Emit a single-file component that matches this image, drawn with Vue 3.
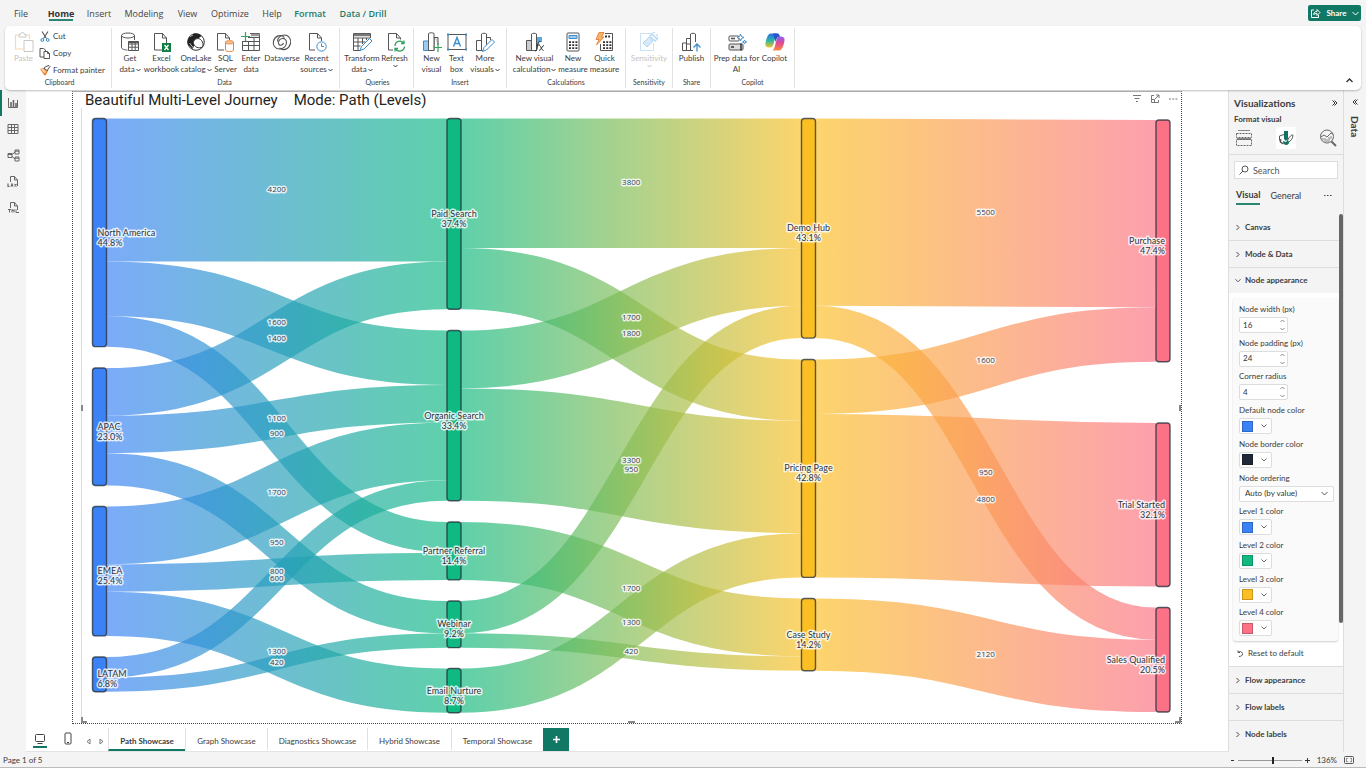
<script setup>
import { ref } from 'vue'

const menus = [
  { t: 'File', c: 'file' }, { t: 'Home', c: 'home' }, { t: 'Insert', c: 'insert' }, { t: 'Modeling', c: 'modeling' },
  { t: 'View', c: 'view' }, { t: 'Optimize', c: 'optimize' }, { t: 'Help', c: 'help' },
  { t: 'Format', c: 'format' }, { t: 'Data / Drill', c: 'drill' }
]

const groups = [
  { name: 'Data', cls: 'g-data', tools: [
    { icon: 'get', a: 'Get', b: 'data', caret: true },
    { icon: 'excel', a: 'Excel', b: 'workbook' },
    { icon: 'onelake', a: 'OneLake', b: 'catalog', caret: true },
    { icon: 'sql', a: 'SQL', b: 'Server' },
    { icon: 'enter', a: 'Enter', b: 'data' },
    { icon: 'dataverse', a: 'Dataverse', b: '' },
    { icon: 'recent', a: 'Recent', b: 'sources', caret: true }
  ] },
  { name: 'Queries', cls: 'g-queries', tools: [
    { icon: 'transform', a: 'Transform', b: 'data', caret: true },
    { icon: 'refresh', a: 'Refresh', b: '', caret: true }
  ] },
  { name: 'Insert', cls: 'g-insert', tools: [
    { icon: 'visual', a: 'New', b: 'visual' },
    { icon: 'textbox', a: 'Text', b: 'box' },
    { icon: 'more', a: 'More', b: 'visuals', caret: true }
  ] },
  { name: 'Calculations', cls: 'g-calc', tools: [
    { icon: 'calc', a: 'New visual', b: 'calculation', caret: true },
    { icon: 'measure', a: 'New', b: 'measure' },
    { icon: 'quick', a: 'Quick', b: 'measure' }
  ] },
  { name: 'Sensitivity', cls: 'g-sens', tools: [{ icon: 'sens', a: 'Sensitivity', b: '', caret: true, off: true }] },
  { name: 'Share', cls: 'g-share', tools: [{ icon: 'publish', a: 'Publish', b: '' }] },
  { name: 'Copilot', cls: 'g-copilot', tools: [
    { icon: 'prep', a: 'Prep data for', b: 'AI' },
    { icon: 'copilot', a: 'Copilot', b: '' }
  ] }
]

const palette = ['#3b82f6', '#10b981', '#fbbf24', '#fb7185']
const columns = [92.5, 447, 801.5, 1156]
const nodeWidth = 14
const unit = 0.03405

const nodes = [
  { id: 'North America', level: 0, y: 118.5, pct: '44.8%' },
  { id: 'APAC', level: 0, y: 368, pct: '23.0%' },
  { id: 'EMEA', level: 0, y: 506.5, pct: '25.4%' },
  { id: 'LATAM', level: 0, y: 657, pct: '6.8%' },
  { id: 'Paid Search', level: 1, y: 118.5, pct: '37.4%' },
  { id: 'Organic Search', level: 1, y: 330.5, pct: '33.4%' },
  { id: 'Partner Referral', level: 1, y: 522, pct: '11.4%' },
  { id: 'Webinar', level: 1, y: 601, pct: '9.2%' },
  { id: 'Email Nurture', level: 1, y: 668.5, pct: '8.7%' },
  { id: 'Demo Hub', level: 2, y: 118.5, pct: '43.1%' },
  { id: 'Pricing Page', level: 2, y: 359.5, pct: '42.8%' },
  { id: 'Case Study', level: 2, y: 598.5, pct: '14.2%' },
  { id: 'Purchase', level: 3, y: 120, pct: '47.4%' },
  { id: 'Trial Started', level: 3, y: 423, pct: '32.1%' },
  { id: 'Sales Qualified', level: 3, y: 607.5, pct: '20.5%' }
].map(n => ({ ...n, x: columns[n.level], outgoing: 0, incoming: 0 }))

const flows = [
  ['North America', 'Paid Search', 4200], ['North America', 'Organic Search', 1600], ['North America', 'Partner Referral', 900],
  ['APAC', 'Paid Search', 1400], ['APAC', 'Organic Search', 1100], ['APAC', 'Webinar', 950],
  ['EMEA', 'Organic Search', 1700], ['EMEA', 'Partner Referral', 800], ['EMEA', 'Email Nurture', 1300],
  ['LATAM', 'Organic Search', 600], ['LATAM', 'Webinar', 420],
  ['Paid Search', 'Demo Hub', 3800], ['Paid Search', 'Pricing Page', 1800],
  ['Organic Search', 'Demo Hub', 1700], ['Organic Search', 'Pricing Page', 3300],
  ['Partner Referral', 'Case Study', 1700],
  ['Webinar', 'Demo Hub', 950], ['Webinar', 'Case Study', 420],
  ['Email Nurture', 'Pricing Page', 1300],
  ['Demo Hub', 'Purchase', 5500], ['Demo Hub', 'Sales Qualified', 950],
  ['Pricing Page', 'Purchase', 1600], ['Pricing Page', 'Trial Started', 4800],
  ['Case Study', 'Sales Qualified', 2120]
]

const byId = Object.fromEntries(nodes.map(n => [n.id, n]))
const links = flows.map(([from, to, value]) => {
  const s = byId[from]
  const t = byId[to]
  const w = value * unit
  const y0 = s.y + s.outgoing + w / 2
  const y1 = t.y + t.incoming + w / 2
  s.outgoing += w
  t.incoming += w
  const x0 = s.x + nodeWidth
  const x1 = t.x
  const xm = (x0 + x1) / 2
  return { key: from + to, value, w, level: s.level, xm, ym: (y0 + y1) / 2, d: `M${x0},${y0}C${xm},${y0} ${xm},${y1} ${x1},${y1}` }
})
nodes.forEach(n => {
  n.h = Math.max(n.outgoing, n.incoming)
  n.tx = n.level === 0 ? n.x + 5 : n.level === 3 ? n.x + 9 : n.x + 7
  n.anchor = n.level === 0 ? 'start' : n.level === 3 ? 'end' : 'middle'
})
const gradients = [0, 1, 2].map(i => ({ id: 'flow' + i, x1: columns[i] + nodeWidth, x2: columns[i + 1], a: palette[i], b: palette[i + 1] }))

const fields = ref([
  { id: 'nw', label: 'Node width (px)', type: 'number', value: 16 },
  { id: 'np', label: 'Node padding (px)', type: 'number', value: 24 },
  { id: 'cr', label: 'Corner radius', type: 'number', value: 4 },
  { id: 'dc', label: 'Default node color', type: 'color', value: '#3b82f6' },
  { id: 'bc', label: 'Node border color', type: 'color', value: '#1f2937' },
  { id: 'no', label: 'Node ordering', type: 'select', value: 'Auto (by value)' },
  { id: 'l1', label: 'Level 1 color', type: 'color', value: palette[0] },
  { id: 'l2', label: 'Level 2 color', type: 'color', value: palette[1] },
  { id: 'l3', label: 'Level 3 color', type: 'color', value: palette[2] },
  { id: 'l4', label: 'Level 4 color', type: 'color', value: palette[3] }
])

const pages = [
  { t: 'Path Showcase', c: 'p-path' }, { t: 'Graph Showcase', c: 'p-graph' }, { t: 'Diagnostics Showcase', c: 'p-diag' },
  { t: 'Hybrid Showcase', c: 'p-hybrid' }, { t: 'Temporal Showcase', c: 'p-temporal' }
]
const page = ref('Path Showcase')
const query = ref('')
const zoom = ref(56)
</script>

<template>
  <div class="app">
    <header class="menubar">
      <nav class="menus" aria-label="Ribbon tabs">
        <button v-for="m in menus" :key="m.t" type="button" class="menu" :class="'m-' + m.c">{{ m.t }}</button>
      </nav>
      <button type="button" class="share">
        <svg width="11" height="11" viewBox="0 0 11 11" fill="none" stroke="#fff"><path d="M4 2H1.500v7.500h7V7M3.500 6.500c.4-2 1.600-3 3.500-3V1.500l3 3-3 3V5.500c-1.500 0-2.500.2-3.500 1z" /></svg>
        <span>Share</span>
        <svg width="7" height="5" viewBox="0 0 7 5" fill="none" stroke="#fff"><path d="M.5 1l3 3 3-3" /></svg>
      </button>
    </header>

    <section class="ribbon" aria-label="Home ribbon">
      <div class="group g-clip">
        <div class="clip">
          <button type="button" class="tool paste" disabled>
            <svg class="icon" viewBox="0 0 20 20" fill="none"><path d="M5 3H1.500v14H9M12 3h3.500v4" stroke="#f7d9b5" stroke-width="1.200" /><path d="M5 5V2.500h1.500a2 2 0 0 1 4 0H12V5z" stroke="#c8c8c8" /><path d="M10 8.500h9v11h-9z" stroke="#c8c8c8" fill="#fff" /></svg>
            <span>Paste</span>
          </button>
          <div class="clip-list">
            <button type="button"><svg width="12" height="11" viewBox="0 0 12 11" fill="none"><path d="M3 .5l4.500 7M9 .5l-4.500 7" stroke="#555" stroke-width="1.100" /><circle cx="3.300" cy="9" r="1.400" stroke="#2b88c8" /><circle cx="8.700" cy="9" r="1.400" stroke="#2b88c8" /></svg>Cut</button>
            <button type="button"><svg width="12" height="11" viewBox="0 0 12 11" fill="#fff" stroke="#555"><path d="M1 .5h3.500L6.500 2v7H1z" /><path d="M5 3.500h3.500l2 2v5H5z" /><path d="M8.500 3.500v2h2" fill="none" /></svg>Copy</button>
            <button type="button"><svg width="12" height="11" viewBox="0 0 12 11"><path d="M1 4l4-1 3.500 3.500L7 10 5.500 10.500z" fill="#e8842c" /><path d="M1.500 4.500l3-.5 2.500 2.500-1 2z" fill="#f8cfa0" /><path d="M5 3l2-1.500 3-1 1 1L9 4 8.500 6z" fill="#fff" stroke="#555" /></svg>Format painter</button>
          </div>
        </div>
        <span class="group-name">Clipboard</span>
      </div>

      <div v-for="g in groups" :key="g.name" class="group" :class="g.cls">
        <div class="tools">
          <button v-for="t in g.tools" :key="t.icon" type="button" class="tool" :class="['t-' + t.icon, { off: t.off }]" :disabled="t.off">
            <svg class="icon" viewBox="0 0 20 20" fill="none" stroke="#555" stroke-width="1">
              <template v-if="t.icon === 'get'"><path d="M1.500 3.500v12c0 1.500 3 2.500 6 2.500M14.500 3.500V8" /><ellipse cx="8" cy="3.500" rx="6.500" ry="2.500" /><path d="M8.500 9.500h10v9h-10z" fill="#fff" /><path d="M8.500 12h10M8.500 15.200h10M12 9.500v9M15.200 9.500v9" /><path d="M8.500 10.200h10" stroke-width="1.800" /></template>
              <template v-else-if="t.icon === 'excel'"><path d="M10 18H2.500V1.500h8l4 4.500v5M10.500 1.500V6h4" /><path d="M10 11h9v9h-9z" fill="#107c41" stroke="none" /><path d="M12.500 13l4 5M16.500 13l-4 5" stroke="#fff" stroke-width="1.300" /></template>
              <template v-else-if="t.icon === 'onelake'"><circle cx="10" cy="10" r="8.300" fill="#fff" stroke="#333" /><path d="M7 2C2.500 4 .8 8.500 2 12.500l4.500 4.500L11 7.500 15.500 4C13 1.500 10 1 7 2z" fill="#222" stroke="none" /><path d="M8.500 8c2-2 5-2 7 .5 1.500 2 2 4 1 6.500-4 2-8 0-9-3.500-.3-1.500 0-2.500 1-3.500z" fill="#fff" stroke="#333" /><path d="M3.500 11l4 5M4 4.500l3-1.500" stroke="#bbb" /></template>
              <template v-else-if="t.icon === 'sql'"><path d="M8 18H1.500V1.500h8l4 4.500v2M9.500 1.500V6h4" /><path d="M9.500 10.500h8v7.500c0 2-8 2-8 0z" fill="#fff" stroke="#e6883f" /><path d="M9.500 10c0-1.700 8-1.700 8 0v1c0 1.200-8 1.200-8 0z" fill="#f4c49b" stroke="#e6883f" /></template>
              <template v-else-if="t.icon === 'enter'"><path d="M9 1.500h9.500v17h-17V9M1.500 13.500h17M7 5.500h11.500M1.500 9.500h17M7.500 9v9.500M13 5.500v13" /><path d="M10 3h8.500" stroke="#999" stroke-width="2.500" /><path d="M4.500 0v9M0 4.500h9" stroke="#31a35b" stroke-width="1.200" /></template>
              <template v-else-if="t.icon === 'dataverse'"><path d="M12.500 5.500C9 1.500 3 4 1.500 9c-1 4 1.500 8 6 8 4 0 7-3 7-6.500 0-3-2.500-4.500-4.500-4-3 .5-4.500 4-3 6 1.500 1.500 4 .5 4.500-1.500" stroke-width="1.100" /><path d="M7.500 16c4 3.500 9.500 1 11-4.500 1-4-1.500-8.500-6-8.500-4 0-7 3-7 6.500" stroke-width="1.100" /></template>
              <template v-else-if="t.icon === 'recent'"><path d="M8 18H2.500V1.500h8l4 4.500v3M10.500 1.500V6h4" /><circle cx="14.500" cy="14.500" r="4.700" fill="#fff" stroke="#3c8dcc" /><path d="M14.500 11.500v3h2.500" stroke="#3c8dcc" /></template>
              <template v-else-if="t.icon === 'transform'"><path d="M1.500 1.500h17V6M1.500 1.500v17H8M1.500 6h17M1.500 10h12M1.500 14h7M6 6v12.500M10.500 6v6M14.500 6v2" /><path d="M2 3h16" stroke="#777" stroke-width="2.500" /><path d="M8 18.500l1.500-4L17.500 6.500l2.500 2.500-8 8z" fill="#fff" stroke="#3c8dcc" /></template>
              <template v-else-if="t.icon === 'refresh'"><path d="M8 18H3.500V1.500h8l4 4.500v1.500M11.500 1.500V6h4" /><path d="M10 14c0-5 6-6.500 8.500-3M19 8.500v3h-3M19.500 14.500c-.5 5-6.500 6-9 2.500M10 19.500v-3h3" stroke="#31a35b" stroke-width="1.300" /></template>
              <template v-else-if="t.icon === 'visual'"><path d="M1.500 9h5v9.500h-5z" fill="#9ccbf0" stroke="#3c8dcc" /><path d="M12 5.500h4V13M12 18.500V5.500" fill="#ddd" /><path d="M6.500 18.500V1.500c1-1 4.500-1 5.500 0v17z" fill="#fff" /><path d="M16 11v9M11.500 15.500h9" stroke="#31a35b" stroke-width="1.200" /></template>
              <template v-else-if="t.icon === 'textbox'"><path d="M1 2.500h18v15H1z" /><path d="M6.500 14.500L10 5.500l3.500 9M7.700 11.500h4.600" stroke="#3c8dcc" stroke-width="1.400" /><path d="M0 1.500h2v2H0zM18 1.500h2v2h-2zM0 16.500h2v2H0zM18 16.500h2v2h-2z" fill="#3c8dcc" stroke="none" /></template>
              <template v-else-if="t.icon === 'more'"><path d="M1.500 18.500V8.500h5M6.500 18.500V2c1-1 4-1 5 0v12M11.500 5.500h4V8M1.500 18.500h7" /><path d="M7.500 19.500l1.500-4 8-8 2.500 2.500-8 8z" fill="#fff" stroke="#3c8dcc" /></template>
              <template v-else-if="t.icon === 'calc'"><path d="M1.500 8.500h5v10h-5z" fill="#ccc" /><path d="M6.500 18.500V2c1-1 4-1 5 0v16.500z" /><path d="M12 5h5v5l-2 0-3 4z" fill="#5ba8dc" stroke="none" /><path d="M10 19c2 0 2-2 2.500-5 .5-3 1-5 3-4.500M11 13h4M14.500 13.500c1.500 0 2 5 4 5M19 13.500c-2 0-3 5-5 5" stroke="#333" /></template>
              <template v-else-if="t.icon === 'measure'"><rect x="4" y="1" width="12" height="18" rx="1" /><path d="M6 3.500h8v3H6z" fill="#9ccbf0" stroke="#3c8dcc" /><path d="M6 10.200h8.500M6 13.200h8.500M6 16.200h8.500" stroke="#333" stroke-width="1.800" stroke-dasharray="2 1.200" /></template>
              <template v-else-if="t.icon === 'quick'"><path d="M10 1.500h7.500v17h-12V12" /><path d="M10 4.500h5M8 10.200h8.500M8 13.200h8.500M8 16.200h8.500" stroke="#333" stroke-width="1.800" stroke-dasharray="2 1.200" /><path d="M4 .5h5L6.500 5H9L1.500 13 4 7.500H1z" fill="#f6b26b" stroke="#e6883f" /></template>
              <template v-else-if="t.icon === 'sens'"><path d="M13 1.500H1.500v17h13V11" stroke="#c9e2f5" /><path d="M4 11l6-6 4 4-6 6z" fill="#d5e9f8" stroke="#b4d8f2" /><path d="M11 4l2-2 5 5-2 2zM14 1l2-1M17 3.500l2-1M18 6l1-1" stroke="#b4d8f2" stroke-width="1.300" /></template>
              <template v-else-if="t.icon === 'publish'"><path d="M1.500 18.500V11h4M5.500 18.500V6.500h4M9.500 18.500V2c1-1 4-1 5 0v8M1.500 18.500H12M5.500 12h4" /><path d="M16 19.500V13M12.500 15.500L16 12l3.500 3.500" stroke="#3c8dcc" stroke-width="1.300" /></template>
              <template v-else-if="t.icon === 'prep'"><rect x="2" y="4" width="10" height="5" rx="1" /><path d="M4 6.500h4" stroke-width="1.600" /><rect x="2" y="12" width="14" height="6" rx="1" fill="#ddd" /><path d="M4 15h3M14 11.500v7" stroke="#333" stroke-width="1.500" /><path d="M13.500 2l1 2.500 2.500 1-2.500 1-1 2.500-1-2.500-2.500-1 2.500-1zM17.500 8l.6 1.400 1.400.6-1.400.6-.6 1.400-.6-1.400-1.400-.6 1.400-.6z" fill="#fff" stroke="#3c8dcc" /></template>
              <template v-else><defs><linearGradient id="cpa" x1="0" y1="0" x2="0" y2="1"><stop offset="0" stop-color="#2b6be8" /><stop offset=".5" stop-color="#29b6a8" /><stop offset="1" stop-color="#f4c21f" /></linearGradient><linearGradient id="cpb" x1="0" y1="0" x2="0" y2="1"><stop offset="0" stop-color="#8a5cf0" /><stop offset=".5" stop-color="#e64a8e" /><stop offset="1" stop-color="#fb8c3a" /></linearGradient></defs><path d="M6 1.500h6.500c-1.500 1-2 3-2.700 5.500C8.700 11 8.500 15.500 5 15.500c-3 0-5-1-4.500-4C1 8 2.500 1.500 6 1.500z" fill="url(#cpa)" stroke="none" /><path d="M14 18.500H7.500c1.500-1 2-3 2.700-5.500 1.100-4 1.300-8.500 4.800-8.500 3 0 5 1 4.500 4-.5 3.500-2 10-5.500 10z" fill="url(#cpb)" stroke="none" /><path d="M8 1.500h4.500c1.500 0 2 1.500 2.500 3-3 0-3.700 3-4.500 5.500" fill="#2456c8" stroke="none" /></template>
            </svg>
            <span>{{ t.a }}</span>
            <span v-if="t.b || t.caret">{{ t.b }}<svg v-if="t.caret" class="caret" width="5" height="4" viewBox="0 0 5 4" fill="none" stroke="currentColor"><path d="M.5 1l2 2 2-2" /></svg></span>
          </button>
        </div>
        <span class="group-name">{{ g.name }}</span>
      </div>
      <button type="button" class="collapse" aria-label="Collapse ribbon"><svg width="7" height="5" viewBox="0 0 7 5" fill="none" stroke="#333" stroke-width="1.400"><path d="M.5 4l3-3 3 3" /></svg></button>
    </section>

    <div class="body">
      <nav class="rail" aria-label="Views">
        <button type="button" class="current" aria-label="Report view"><svg width="12" height="12" viewBox="0 0 12 12" fill="none" stroke="#666"><path d="M1.500 1v9.500h9V3" /><path d="M4 5v5M6.500 3v7M9 6v4" stroke-width="1.600" /></svg></button>
        <button type="button" aria-label="Table view"><svg width="12" height="12" viewBox="0 0 12 12" fill="none" stroke="#666"><path d="M1 1.500h10v9H1zM1 4.500h10M1 7.500h10M4.500 1.500v9M7.500 1.500v9" /></svg></button>
        <button type="button" aria-label="Model view"><svg width="13" height="13" viewBox="0 0 13 13" fill="none" stroke="#666"><path d="M1 4.500h4v4H1zM8 1h4v4H8zM8 8h4v4H8zM1 5.500h4M8 2.200h4M8 9.200h4M5 5.500L8 3M5 7.500L8 10" /></svg></button>
        <button type="button" aria-label="DAX query view"><svg width="13" height="13" viewBox="0 0 13 13" fill="none" stroke="#666"><path d="M3.500 7V1.500h4l3 3.500v6M7.500 1.500V5h3" /><path d="M1 8.500v3h1.500M4 11.500L5 9l1 2.500M7.500 9l2 2.500M9.500 9l-2 2.500" stroke-width="1.200" /></svg></button>
        <button type="button" aria-label="TMDL view"><svg width="13" height="13" viewBox="0 0 13 13" fill="none" stroke="#666"><path d="M3.500 7V1.500h4l3 3.500v4M7.500 1.500V5h3" /><path d="M1 8.500h3M2.500 8.500v3M5 11.500v-3l1 1.500 1-1.500v3M9 8.500v3h3" /></svg></button>
      </nav>

      <main class="stage">
        <div class="page">
          <div class="visual-head">
            <h1><span>Beautiful Multi-Level Journey</span><span>Mode: Path (Levels)</span></h1>
            <div class="visual-tools">
              <button type="button" aria-label="Filters"><svg width="10" height="10" viewBox="0 0 10 10" stroke="#777"><path d="M1 1.500h8M2.500 4.500h5M4 7.500h2" /></svg></button>
              <button type="button" aria-label="Focus mode"><svg width="10" height="10" viewBox="0 0 10 10" fill="none" stroke="#777"><path d="M4 1.500H1.500v7h7V6M1.500 5.500h3v3M5 5l4-4M6 1h3v3" /></svg></button>
              <button type="button" aria-label="More options"><svg width="10" height="10" viewBox="0 0 10 10" fill="#777"><path d="M1 4.500h2v1H1zM4.200 4.500h2v1h-2zM7.400 4.500h2v1h-2z" /></svg></button>
            </div>
          </div>
          <svg class="sankey" viewBox="73 108 1108 615" role="img" aria-label="Multi-level journey">
            <defs>
              <linearGradient v-for="g in gradients" :id="g.id" :key="g.id" gradientUnits="userSpaceOnUse" :x1="g.x1" :x2="g.x2" y1="0" y2="0">
                <stop offset="0" :stop-color="g.a" /><stop offset="1" :stop-color="g.b" />
              </linearGradient>
            </defs>
            <path class="frame" d="M81.500 108v613" />
            <path class="grip" d="M82 405v6M1180 405v6M628 722h7M82 717v5h5M1180 717v5h-5" />
            <path v-for="l in links" :key="l.key" class="flow" :d="l.d" :stroke="`url(#flow${l.level})`" :stroke-width="l.w" />
            <rect v-for="n in nodes" :key="n.id" class="node" :x="n.x" :y="n.y" :width="nodeWidth" :height="n.h" rx="3" :fill="palette[n.level]" />
            <text v-for="l in links" :key="'v' + l.key" class="value" :x="l.xm" :y="l.ym + 2">{{ l.value }}</text>
            <text v-for="n in nodes" :key="'t' + n.id" class="label" :y="n.y + n.h / 2 + 3" :text-anchor="n.anchor">
              <tspan :x="n.tx">{{ n.id }}</tspan><tspan :x="n.tx" dy="10">{{ n.pct }}</tspan>
            </text>
          </svg>
        </div>

        <nav class="strip" aria-label="Report pages">
          <button type="button" class="device desk" aria-label="Desktop layout"><svg width="12" height="12" viewBox="0 0 12 12" fill="none" stroke="#444"><rect x="1.500" y="1.500" width="9" height="7" rx="1" /><path d="M3.500 10.500h5" /></svg></button>
          <button type="button" class="device" aria-label="Mobile layout"><svg width="8" height="14" viewBox="0 0 8 14" fill="none" stroke="#444"><rect x="1" y="1" width="6" height="11" rx="1" /><path d="M3 10.500h2" /></svg></button>
          <button type="button" class="step" aria-label="Previous page"><svg width="5" height="7" viewBox="0 0 5 7" fill="none" stroke="#777"><path d="M4 1v5L1 3.500z" /></svg></button>
          <button type="button" class="step" aria-label="Next page"><svg width="5" height="7" viewBox="0 0 5 7" fill="none" stroke="#777"><path d="M1 1v5l3-2.500z" /></svg></button>
          <button v-for="p in pages" :key="p.t" type="button" class="sheet" :class="[p.c, { on: page === p.t }]" @click="page = p.t">{{ p.t }}</button>
          <button type="button" class="add" aria-label="New page"><svg width="9" height="9" viewBox="0 0 9 9" stroke="#fff" stroke-width="1.600"><path d="M4.500 1v7M1 4.500h7" /></svg></button>
        </nav>
      </main>

      <aside class="viz">
        <div class="viz-title"><h2>Visualizations</h2><button type="button" aria-label="Collapse pane"><svg width="5" height="6" viewBox="0 0 5 6" fill="none" stroke="#333"><path d="M.5.5L3 3 .5 5.500M2.500.5L5 3 2.500 5.500" /></svg></button></div>
        <p class="viz-sub">Format visual</p>
        <div class="modes">
          <button type="button" aria-label="Build visual"><svg width="18" height="18" viewBox="0 0 18 18" fill="none" stroke="#666"><path d="M3 1.500h12" stroke="#888" /><path d="M1.500 4.500h15v4h-15zM1.500 10.500h15v6h-15z" stroke-dasharray="2 1" /><path d="M2 10h14" stroke-width="1.500" /></svg></button>
          <button type="button" class="chosen" aria-label="Format visual"><svg width="16" height="16" viewBox="0 0 16 16" fill="none" stroke="#555"><path d="M6 1h4v8l-2 2-2-2z" fill="#0f7562" stroke="none" /><path d="M6 4.500L1.500 6v4.500M14.500 4.500c-2 1-4.500 4-5 6.500M15 5c0 3-2 6-5 7.500" /><path d="M5 11c0 3.500 3 5 5.500 3 1-1 .5-3-1-3.500L8 12z" fill="#0f7562" stroke="none" /><path d="M2.500 9v3l3 2" stroke-width="1.500" /></svg></button>
          <button type="button" aria-label="Analytics"><svg width="18" height="18" viewBox="0 0 18 18" fill="none" stroke="#666"><circle cx="8" cy="7.500" r="6.500" /><path d="M12.500 12.500L17 17" stroke-width="2" /><path d="M2 8l3-2 3 2 4-4 2 1" /><path d="M4 9v2M6 9v4M8 10v3M10 8v5M12 7v3" stroke="#888" /></svg></button>
        </div>
        <div class="search">
          <svg width="10" height="10" viewBox="0 0 10 10" fill="none" stroke="#555"><circle cx="6" cy="4" r="3" /><path d="M4 6L.5 9.500" /></svg>
          <input v-model="query" type="search" placeholder="Search" aria-label="Search" />
        </div>
        <div class="subtabs">
          <button type="button" class="on">Visual</button><button type="button">General</button>
          <button type="button" class="dots" aria-label="More options"><svg width="8" height="3" viewBox="0 0 8 3" fill="#444"><path d="M0 1h1.500v1H0zM3 1h1.500v1H3zM6 1h1.500v1H6z" /></svg></button>
        </div>
        <div class="scroll">
          <button v-for="s in ['Canvas', 'Mode & Data']" :key="s" type="button" class="sec"><svg width="5" height="7" viewBox="0 0 5 7" fill="none" stroke="#444"><path d="M1 1l2.500 2.500L1 6" /></svg>{{ s }}</button>
          <button type="button" class="sec open" aria-expanded="true"><svg width="7" height="5" viewBox="0 0 7 5" fill="none" stroke="#444"><path d="M.5 1l3 3 3-3" /></svg>Node appearance</button>
          <div class="open-body">
            <div class="card">
              <div v-for="f in fields" :key="f.id" class="field">
                <label :for="f.id">{{ f.label }}</label>
                <span v-if="f.type === 'number'" class="num">
                  <input :id="f.id" v-model="f.value" type="number" />
                  <svg width="5" height="12" viewBox="0 0 5 12" fill="none" stroke="#888"><path d="M.5 3l2-2 2 2M.5 9l2 2 2-2" /></svg>
                </span>
                <button v-else-if="f.type === 'color'" :id="f.id" type="button" class="swatch">
                  <i :style="{ background: f.value }"></i>
                  <svg width="6" height="4" viewBox="0 0 6 4" fill="none" stroke="#666"><path d="M.5.5l2.500 2.500L5.500.5" /></svg>
                </button>
                <span v-else class="pick">
                  <select :id="f.id" v-model="f.value"><option>Auto (by value)</option></select>
                  <svg width="7" height="5" viewBox="0 0 7 5" fill="none" stroke="#555"><path d="M.5 1l3 3 3-3" /></svg>
                </span>
              </div>
            </div>
            <button type="button" class="reset"><svg width="6" height="7" viewBox="0 0 6 7" fill="none" stroke="#555"><path d="M1 .5v2h2M1 2.500C3 .5 5.500 2 5.500 4 5.500 5.500 4 6.500 2 6.500" /></svg>Reset to default</button>
          </div>
          <button v-for="s in ['Flow appearance', 'Flow labels', 'Node labels']" :key="s" type="button" class="sec top"><svg width="5" height="7" viewBox="0 0 5 7" fill="none" stroke="#444"><path d="M1 1l2.500 2.500L1 6" /></svg>{{ s }}</button>
          <span class="thumb"></span>
        </div>
      </aside>

      <aside class="data-pane">
        <button type="button" aria-label="Expand Data pane"><svg width="5" height="6" viewBox="0 0 5 6" fill="none" stroke="#333"><path d="M2.500.5L0 3l2.500 2.500M4.500.5L2 3l2.500 2.500" /></svg></button>
        <h2>Data</h2>
      </aside>
    </div>

    <footer class="status">
      <span>Page 1 of 5</span>
      <div class="zoom">
        <button type="button" aria-label="Zoom out"><svg width="5" height="5" viewBox="0 0 5 5" stroke="#333"><path d="M1 2.500h3" /></svg></button>
        <input v-model="zoom" type="range" min="0" max="100" aria-label="Zoom" />
        <button type="button" aria-label="Zoom in"><svg width="5" height="5" viewBox="0 0 5 5" stroke="#333"><path d="M0 2.500h5M2.500 0v5" /></svg></button>
        <span class="pct">136%</span>
        <button type="button" aria-label="Fit to page"><svg width="10" height="8" viewBox="0 0 10 8" fill="none" stroke="#555"><rect x=".5" y=".5" width="9" height="7" rx="1" /><path d="M2.500 3.500v-1h1M6.500 2.500h1v1M7.500 4.500v1h-1M3.500 5.500h-1v-1" /></svg></button>
      </div>
    </footer>
  </div>
</template>

<style>
body { margin: 0; background: #f4f4f4; }
</style>

<style scoped>
.app { display: flex; flex-direction: column; height: 100vh; overflow: hidden; background: #f4f4f4; color: #3c3c3c; font: 8px/11px Lato, "Open Sans", sans-serif; }
.app *, .app *::before { box-sizing: border-box; }
button { border: 0; padding: 0; margin: 0; background: none; font: inherit; color: inherit; display: flex; align-items: center; justify-content: center; white-space: nowrap; cursor: pointer; }
svg { display: block; flex: none; }
h1, h2, p { margin: 0; }

.menubar { display: flex; justify-content: space-between; align-items: center; height: 26px; flex: none; padding: 0 5px; }
.menus { display: flex; height: 26px; font-family: "Open Sans", sans-serif; color: #444; }
.menu { position: relative; font-size: 9px; width: 32px; }
.m-home { width: 48px; font-weight: 700; color: #333; }
.m-home::before { content: ""; position: absolute; left: 12px; right: 12px; bottom: 5px; height: 2px; background: #2a8573; }
.m-insert { width: 28px; }
.m-modeling { width: 62px; }
.m-view { width: 25px; }
.m-optimize { width: 60px; }
.m-help { width: 24px; }
.m-format { width: 52px; }
.m-drill { width: 54px; }
.m-format, .m-drill { color: #1b7a67; font-weight: 600; }
.share { width: 53px; height: 16px; gap: 5px; border-radius: 2px; background: #117865; color: #fff; font-weight: 700; }

.ribbon { position: relative; z-index: 2; display: flex; flex: none; height: 64px; margin: 0 5px; background: #fff; border-radius: 5px; box-shadow: 0 1px 2px rgba(0, 0, 0, .25); }
.group { display: flex; flex-direction: column; align-items: center; justify-content: space-between; margin: 2px 0; padding: 4px 0 0; border-right: 1px solid #e3e3e3; }
.group-name { font-size: 7px; line-height: 11px; }
.tools { display: flex; align-items: flex-start; }
.tool { flex-direction: column; flex: none; }
.tool span { display: flex; align-items: center; line-height: 11px; }
.icon { width: 20px; height: 20px; margin-bottom: 1px; }
.caret { margin-left: 1px; }
.off, .paste { color: #c3c3c3; }
.g-clip { width: 107px; padding-top: 0; padding-left: 3px; }
.clip { display: flex; align-items: flex-start; width: 100%; }
.paste { width: 31px; padding-top: 4px; }
.clip-list { display: flex; flex-direction: column; gap: 6px; padding: 3px 0 0; }
.clip-list button { justify-content: flex-start; gap: 2px; height: 11px; }
.g-data { width: 228px; padding-right: 2px; }
.g-queries { width: 74px; padding-left: 2px; }
.g-insert { width: 93px; }
.g-calc { width: 119px; }
.g-sens { width: 47px; }
.g-share { width: 38px; }
.g-copilot { width: 84px; }
.t-get, .t-refresh, .t-more { width: 31px; }
.t-excel, .t-copilot { width: 32px; }
.t-onelake, .t-measure { width: 37px; }
.t-sql { width: 22px; }
.t-enter { width: 29px; }
.t-dataverse { width: 33px; }
.t-recent { width: 36px; }
.t-transform { width: 34px; }
.t-visual { width: 24px; }
.t-textbox, .t-quick { width: 26px; }
.t-calc { width: 40px; }
.t-prep { width: 44px; }
.collapse { margin: auto 8px 7px auto; }

.body { display: flex; flex: 1; min-height: 0; }
.rail { display: flex; flex-direction: column; width: 26px; flex: none; }
.rail button { width: 26px; height: 26px; }
.rail .current { border-left: 2px solid #117865; padding-right: 2px; }
.stage { display: flex; flex-direction: column; flex: 1; min-width: 0; background: #fff; }
.page { display: flex; flex-direction: column; flex: 1; min-height: 0; margin: 1px 46px 0; border: 1px dotted #444; border-top: 1px solid #bbb; }
.visual-head { display: flex; justify-content: space-between; height: 16px; flex: none; padding: 0 3px 0 12px; }
h1 { display: flex; gap: 16px; font: 400 15px/16px Roboto, sans-serif; color: #252423; white-space: nowrap; }
.visual-tools { display: flex; gap: 8px; }
.visual-tools button { height: 14px; }
.sankey { flex: 1; min-height: 0; width: 100%; }
.frame { stroke: #ddd; }
.grip { fill: none; stroke: #888; stroke-width: 2; }
.flow { fill: none; stroke-opacity: .67; }
.node { stroke: #1f2937; stroke-opacity: .75; stroke-width: 1.4; }
.value, .label { paint-order: stroke; stroke: rgba(255, 255, 255, .8); stroke-width: 3px; stroke-linejoin: round; }
.value { font-size: 8px; fill: #334155; text-anchor: middle; font-family: "Open Sans", sans-serif; }
.label { font-size: 9px; fill: #2b3543; }

.strip { display: flex; flex: none; height: 24px; margin-top: 4px; border-bottom: 1px solid #e3e3e3; }
.device { width: 28px; border-bottom: 2px solid transparent; }
.desk { position: relative; }
.desk::before { content: ""; position: absolute; left: 7px; right: 7px; bottom: 1px; height: 2px; background: #117865; }
.step { width: 13px; padding-top: 3px; }
.sheet { border-left: 1px solid #e0e0e0; border-bottom: 2px solid transparent; padding-top: 5px; }
.sheet.on { font-weight: 700; border-bottom-color: #117865; }
.p-path { width: 77px; }
.p-graph { width: 82px; }
.p-diag { width: 100px; }
.p-hybrid { width: 84px; }
.p-temporal { width: 92px; }
.add { width: 26px; background: #117865; }

.viz { display: flex; flex-direction: column; width: 116px; flex: none; border-left: 1px solid #ddd; border-right: 1px solid #ddd; }
.viz-title { display: flex; align-items: center; justify-content: space-between; padding: 6px 6px 0 5px; }
.viz-title h2 { font-size: 10px; line-height: 14px; font-weight: 700; }
.viz-sub { padding: 4px 5px 0; font-weight: 700; }
.modes { display: flex; justify-content: space-between; padding: 2px 6px; height: 30px; flex: none; border-bottom: 1px solid #ddd; }
.modes button { height: 22px; }
.modes .chosen { width: 20px; background: #fff; }
.search { display: flex; align-items: center; gap: 4px; height: 18px; flex: none; margin: 6px 5px 0; padding: 0 4px; border: 1px solid #ddd; background: #fff; }
.search input { flex: 1; min-width: 0; border: 0; padding: 0; outline: 0; background: none; font: inherit; font-size: 9px; }
.search input::placeholder { color: #555; opacity: 1; }
.subtabs { display: flex; gap: 10px; height: 19px; margin: 7px 11px 9px 7px; flex: none; font-size: 9px; }
.subtabs .on { font-weight: 700; border-bottom: 2px solid #2a8573; }
.dots { margin-left: auto; }
.scroll { position: relative; flex: 1; min-height: 0; overflow: hidden; }
.thumb { position: absolute; right: 0; top: 0; width: 4px; height: 409px; border-radius: 2px; background: #666; }
.sec { width: 100%; height: 27px; justify-content: flex-start; gap: 4px; padding-left: 6px; border-bottom: 1px solid #ddd; font-weight: 700; }
.sec svg { width: 6px; }
.sec.open { height: 25px; border-bottom: 0; }
.sec.top { border-bottom: 0; border-top: 1px solid #ddd; }
.open-body { background: #fff; padding: 5px 5px 0 4px; }
.card { display: grid; grid-template-rows: repeat(10, 1fr); height: 343px; padding: 5px 5px 1px 6px; background: #fafafa; border-radius: 3px; box-shadow: 0 1px 2px rgba(0, 0, 0, .2); }
.field { display: flex; flex-direction: column; align-items: flex-start; gap: 1px; }
.field label { line-height: 13px; }
.num, .swatch, .pick { display: flex; align-items: center; justify-content: space-between; height: 16px; border: 1px solid #ddd; border-radius: 2px; background: #fff; }
.num { width: 49px; padding: 0 2px 0 3px; }
.num input { width: 30px; border: 0; padding: 0; background: none; font: inherit; appearance: textfield; color: #333; }
.num input::-webkit-inner-spin-button { appearance: none; }
.swatch { width: 33px; padding: 0 4px 0 2px; }
.swatch i { width: 11px; height: 11px; border: 1px solid rgba(0, 0, 0, .2); }
.pick { position: relative; width: 95px; }
.pick select { width: 100%; height: 14px; appearance: none; border: 0; padding: 0 12px 0 5px; background: none; font: inherit; color: #333; }
.pick svg { position: absolute; right: 5px; pointer-events: none; }
.reset { height: 25px; gap: 5px; margin-left: 4px; }

.data-pane { display: flex; flex-direction: column; align-items: center; width: 22px; flex: none; padding-top: 9px; gap: 11px; }
.data-pane h2 { writing-mode: vertical-rl; font-size: 10px; line-height: 14px; }

.status { display: flex; align-items: center; justify-content: space-between; height: 16px; flex: none; padding: 1px 12px 0 3px; border-bottom: 1px solid #bbb; }
.zoom { display: flex; align-items: center; gap: 3px; }
.zoom input { appearance: none; width: 64px; height: 8px; margin: 0; background: linear-gradient(#999, #999) center / 100% 1px no-repeat; }
.zoom input::-webkit-slider-thumb { appearance: none; width: 2px; height: 7px; background: #222; }
.zoom .pct { padding: 0 4px; }
</style>
